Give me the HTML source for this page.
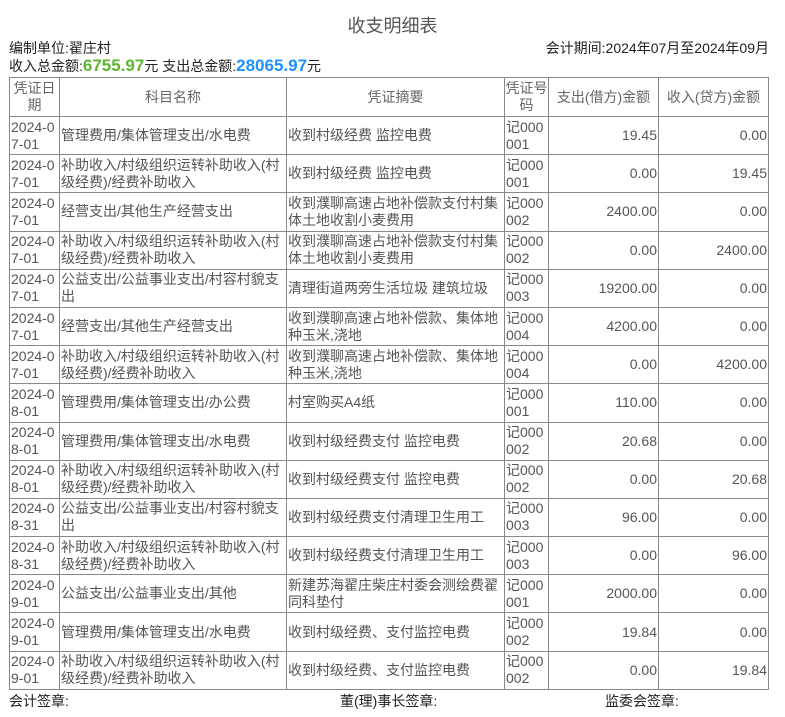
<!DOCTYPE html>
<html><head><meta charset="utf-8"><style>
body{margin:0;width:785px;height:717px;overflow:hidden;background:#fff;font-family:"Liberation Sans","Noto Sans CJK SC",sans-serif;color:#333;font-size:14px}
.t{position:absolute;left:0;width:785px;top:12px;text-align:center;font-size:18px;color:#555}
.l{position:absolute;left:9px;font-size:14px;color:#222}
.r{position:absolute;right:16px;font-size:14px;color:#222}
table{position:absolute;left:9px;top:77px;border-collapse:collapse;table-layout:fixed;width:760px}
td,th{border:1px solid #888;padding:0 1px;line-height:17px;font-size:14px;color:#555;font-weight:normal;overflow:hidden;word-break:break-all}
th{height:38px;color:#666;text-align:center;padding:0}
td{height:37.2px}
.n{text-align:right}
.g{color:#5cb531;font-weight:bold;font-size:17px}
.b{color:#1e90ff;font-weight:bold;font-size:17px}
.f{position:absolute;top:691px;font-size:14px;color:#222}
</style></head><body>
<div class="t">收支明细表</div>
<div class="l" style="top:38px">编制单位:翟庄村</div>
<div class="r" style="top:38px">会计期间:2024年07月至2024年09月</div>
<div class="l" style="top:56px">收入总金额:<span class="g">6755.97</span>元 支出总金额:<span class="b">28065.97</span>元</div>
<table>
<colgroup><col style="width:50px"><col style="width:227px"><col style="width:218px"><col style="width:44px"><col style="width:110px"><col style="width:110px"></colgroup>
<tr><th>凭证日期</th><th>科目名称</th><th>凭证摘要</th><th>凭证号码</th><th>支出(借方)金额</th><th>收入(贷方)金额</th></tr>
<tr><td>2024-07-01</td><td>管理费用/集体管理支出/水电费</td><td>收到村级经费 监控电费</td><td>记000001</td><td class="n">19.45</td><td class="n">0.00</td></tr>
<tr><td>2024-07-01</td><td>补助收入/村级组织运转补助收入(村级经费)/经费补助收入</td><td>收到村级经费 监控电费</td><td>记000001</td><td class="n">0.00</td><td class="n">19.45</td></tr>
<tr><td>2024-07-01</td><td>经营支出/其他生产经营支出</td><td>收到濮聊高速占地补偿款支付村集体土地收割小麦费用</td><td>记000002</td><td class="n">2400.00</td><td class="n">0.00</td></tr>
<tr><td>2024-07-01</td><td>补助收入/村级组织运转补助收入(村级经费)/经费补助收入</td><td>收到濮聊高速占地补偿款支付村集体土地收割小麦费用</td><td>记000002</td><td class="n">0.00</td><td class="n">2400.00</td></tr>
<tr><td>2024-07-01</td><td>公益支出/公益事业支出/村容村貌支出</td><td>清理街道两旁生活垃圾 建筑垃圾</td><td>记000003</td><td class="n">19200.00</td><td class="n">0.00</td></tr>
<tr><td>2024-07-01</td><td>经营支出/其他生产经营支出</td><td>收到濮聊高速占地补偿款、集体地种玉米,浇地</td><td>记000004</td><td class="n">4200.00</td><td class="n">0.00</td></tr>
<tr><td>2024-07-01</td><td>补助收入/村级组织运转补助收入(村级经费)/经费补助收入</td><td>收到濮聊高速占地补偿款、集体地种玉米,浇地</td><td>记000004</td><td class="n">0.00</td><td class="n">4200.00</td></tr>
<tr><td>2024-08-01</td><td>管理费用/集体管理支出/办公费</td><td>村室购买A4纸</td><td>记000001</td><td class="n">110.00</td><td class="n">0.00</td></tr>
<tr><td>2024-08-01</td><td>管理费用/集体管理支出/水电费</td><td>收到村级经费支付 监控电费</td><td>记000002</td><td class="n">20.68</td><td class="n">0.00</td></tr>
<tr><td>2024-08-01</td><td>补助收入/村级组织运转补助收入(村级经费)/经费补助收入</td><td>收到村级经费支付 监控电费</td><td>记000002</td><td class="n">0.00</td><td class="n">20.68</td></tr>
<tr><td>2024-08-31</td><td>公益支出/公益事业支出/村容村貌支出</td><td>收到村级经费支付清理卫生用工</td><td>记000003</td><td class="n">96.00</td><td class="n">0.00</td></tr>
<tr><td>2024-08-31</td><td>补助收入/村级组织运转补助收入(村级经费)/经费补助收入</td><td>收到村级经费支付清理卫生用工</td><td>记000003</td><td class="n">0.00</td><td class="n">96.00</td></tr>
<tr><td>2024-09-01</td><td>公益支出/公益事业支出/其他</td><td>新建苏海翟庄柴庄村委会测绘费翟同科垫付</td><td>记000001</td><td class="n">2000.00</td><td class="n">0.00</td></tr>
<tr><td>2024-09-01</td><td>管理费用/集体管理支出/水电费</td><td>收到村级经费、支付监控电费</td><td>记000002</td><td class="n">19.84</td><td class="n">0.00</td></tr>
<tr><td>2024-09-01</td><td>补助收入/村级组织运转补助收入(村级经费)/经费补助收入</td><td>收到村级经费、支付监控电费</td><td>记000002</td><td class="n">0.00</td><td class="n">19.84</td></tr>
</table>
<div class="f" style="left:9px">会计签章:</div>
<div class="f" style="left:340px">董(理)事长签章:</div>
<div class="f" style="left:605px">监委会签章:</div>
</body></html>
